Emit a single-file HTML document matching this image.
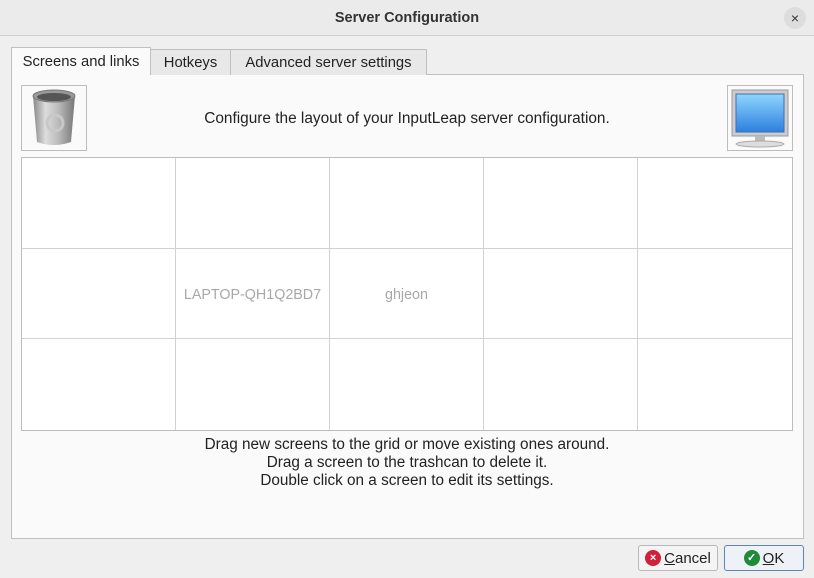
<!DOCTYPE html><html><head><style>
*{box-sizing:border-box;margin:0;padding:0}
body{width:814px;height:578px;background:#efefef;font-family:"Liberation Sans",sans-serif;font-size:15px;color:#222;position:relative;overflow:hidden}
.a{position:absolute}
.title{left:0;top:1px;width:814px;height:34px;text-align:center;line-height:35px;font-weight:bold;font-size:14.5px;color:#333}
.tb{left:0;top:0;width:814px;height:36px;background:#ebebeb;border-bottom:1px solid #cfcfcf}
.close{left:784px;top:7px;width:22px;height:22px;border-radius:50%;background:#ddd;text-align:center;line-height:22px;font-size:14px;color:#333}
.panel{left:11px;top:74px;width:793px;height:465px;background:#fafafa;border:1px solid #c0c0c0}
.tab{top:49px;height:26px;border:1px solid #c0c0c0;border-bottom:none;background:#e8e8e8;text-align:center;line-height:27px;font-size:14.8px}
.tab.act{top:47px;height:28px;background:#fafafa;z-index:2;line-height:28px}
.box{border:1px solid #bdbdbd;background:#fafafa}
.grid{left:21px;top:157px;width:772px;height:274px;border:1px solid #bdbdbd;background:#fff;display:grid;grid-template-columns:repeat(5,1fr);grid-template-rows:repeat(3,1fr)}
.grid div{border-right:1px solid #d2d2d2;border-bottom:1px solid #d2d2d2;display:flex;align-items:center;justify-content:center;color:#a8a8a8;font-size:14.3px;padding-top:3px}
.grid div:nth-child(5n){border-right:none}.grid div:nth-child(n+11){border-bottom:none}
.help{left:0;width:814px;text-align:center;top:436px;line-height:18px;font-size:15.3px}
.btn{top:545px;height:26px;border:1px solid #b8b8b8;border-radius:3px;background:#f4f4f4;font-size:15px;display:flex;align-items:center;justify-content:center;gap:3px}
.ic{width:16px;height:16px;border-radius:50%;color:#fff;font-size:11px;line-height:16px;text-align:center;font-weight:bold}
</style></head><body>
<div class="a tb"></div>
<div class="a title">Server Configuration</div>
<div class="a close">×</div>
<div class="a panel"></div>
<div class="a tab act" style="left:11px;width:140px">Screens and links</div>
<div class="a tab" style="left:150px;width:81px">Hotkeys</div>
<div class="a tab" style="left:230px;width:197px">Advanced server settings</div>
<div class="a box" style="left:21px;top:85px;width:66px;height:66px">
<svg width="64" height="64" viewBox="0 0 64 64"><defs><linearGradient id="t" x1="0" x2="1"><stop offset="0" stop-color="#888"/><stop offset=".3" stop-color="#ddd"/><stop offset=".6" stop-color="#bbb"/><stop offset="1" stop-color="#777"/></linearGradient></defs>
<path d="M11 10 L15 56 Q32 62 49 56 L53 10 Z" fill="url(#t)"/><ellipse cx="32" cy="10" rx="21" ry="6" fill="#999" stroke="#777"/><ellipse cx="32" cy="11" rx="17" ry="4" fill="#555"/><circle cx="33" cy="37" r="8" fill="none" stroke="#c8c8c8" stroke-width="3"/></svg></div>
<div class="a" style="left:0;width:814px;top:110px;text-align:center;font-size:15.4px">Configure the layout of your InputLeap server configuration.</div>
<div class="a box" style="left:727px;top:85px;width:66px;height:66px">
<svg width="64" height="64" viewBox="0 0 64 64"><defs><linearGradient id="s" x1="0" y1="0" x2="0" y2="1"><stop offset="0" stop-color="#8fd6fb"/><stop offset="1" stop-color="#2d7fe0"/></linearGradient></defs>
<rect x="4" y="4" width="56" height="46" fill="#ccc" stroke="#999"/><rect x="8" y="8" width="48" height="38" fill="url(#s)" stroke="#3c6fb5"/><rect x="27" y="50" width="10" height="6" fill="#bbb"/><ellipse cx="32" cy="58" rx="24" ry="3" fill="#ddd" stroke="#aaa"/></svg></div>
<div class="a grid"><div></div><div></div><div></div><div></div><div></div><div></div><div>LAPTOP-QH1Q2BD7</div><div>ghjeon</div><div></div><div></div><div></div><div></div><div></div><div></div><div></div></div>
<div class="a help">Drag new screens to the grid or move existing ones around.<br>Drag a screen to the trashcan to delete it.<br>Double click on a screen to edit its settings.</div>
<div class="a btn" style="left:638px;width:80px"><span class="ic" style="background:#d0203a">×</span><span><u>C</u>ancel</span></div>
<div class="a btn" style="left:724px;width:80px;border-color:#5b87b0;background:#eef2f6"><span class="ic" style="background:#1f8a3a">✓</span><span><u>O</u>K</span></div>
</body></html>
